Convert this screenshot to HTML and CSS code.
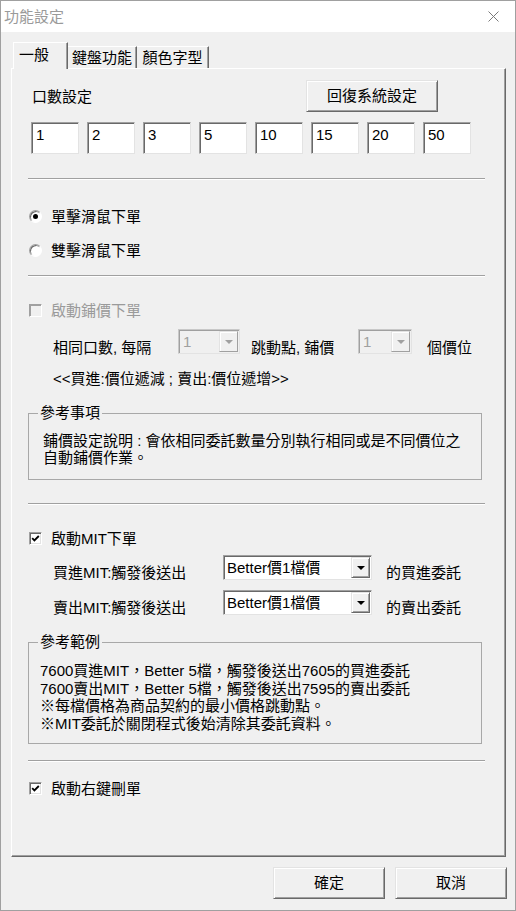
FILE: index.html
```html
<!DOCTYPE html>
<html lang="zh-Hant">
<head>
<meta charset="utf-8">
<title>功能設定</title>
<link rel="stylesheet" href="styles.css">
</head>
<body>
<div class="window">
  <div class="titlebar">
    <span class="title">功能設定</span>
    <svg class="close" width="11" height="11" viewBox="0 0 11 11"><path d="M0.5 0.5 L10.5 10.5 M10.5 0.5 L0.5 10.5" stroke="#7a7a7a" stroke-width="1"/></svg>
  </div>
  <div class="tabstrip">
    <div class="tab active">一般</div>
    <div class="tab t2">鍵盤功能</div>
    <div class="tab t3">顏色字型</div>
  </div>
  <div class="panel">
    <div class="row-top">
      <span class="lbl">口數設定</span>
      <button class="btn btn-reset">回復系統設定</button>
    </div>
    <div class="inputs">
      <div class="edit">1</div>
      <div class="edit">2</div>
      <div class="edit">3</div>
      <div class="edit">5</div>
      <div class="edit">10</div>
      <div class="edit">15</div>
      <div class="edit">20</div>
      <div class="edit">50</div>
    </div>
    <div class="sep sep1"></div>
    <div class="opt radio1"><span class="radio checked"><span class="dot"></span></span><span class="opt-text">單擊滑鼠下單</span></div>
    <div class="opt radio2"><span class="radio"></span><span class="opt-text">雙擊滑鼠下單</span></div>
    <div class="sep sep2"></div>
    <div class="opt chk1 disabled"><span class="cb cb-disabled"></span><span class="opt-text">啟動鋪價下單</span></div>
    <div class="combo-row row-fill">
      <span class="rlbl w-fill1">相同口數, 每隔</span>
      <div class="combo combo-dis c-fill1"><span class="ctext">1</span><span class="ddbtn"><span class="arrow arrow-dis"></span></span></div>
      <span class="rlbl w-fill2">跳動點, 鋪價</span>
      <div class="combo combo-dis c-fill2"><span class="ctext">1</span><span class="ddbtn"><span class="arrow arrow-dis"></span></span></div>
      <span class="rlbl">個價位</span>
    </div>
    <div class="note">&lt;&lt;買進:價位遞減 ; 賣出:價位遞增&gt;&gt;</div>
    <fieldset class="group group1">
      <legend>參考事項</legend>
      <div class="gtext">鋪價設定說明 : 會依相同委託數量分別執行相同或是不同價位之<br>自動鋪價作業。</div>
    </fieldset>
    <div class="sep sep3"></div>
    <div class="opt chk2"><span class="cb"><svg width="11" height="11" viewBox="0 0 11 11"><path d="M2.2 5.2 L4.4 7.4 L8.8 3" fill="none" stroke="#000" stroke-width="1.8"/></svg></span><span class="opt-text">啟動MIT下單</span></div>
    <div class="combo-row row-mit1">
      <span class="rlbl w-mit">買進MIT:觸發後送出</span>
      <div class="combo c-mit"><span class="ctext">Better價1檔價</span><span class="ddbtn"><span class="arrow"></span></span></div>
      <span class="rlbl">的買進委託</span>
    </div>
    <div class="combo-row row-mit2">
      <span class="rlbl w-mit">賣出MIT:觸發後送出</span>
      <div class="combo c-mit"><span class="ctext">Better價1檔價</span><span class="ddbtn"><span class="arrow"></span></span></div>
      <span class="rlbl">的賣出委託</span>
    </div>
    <fieldset class="group group2">
      <legend>參考範例</legend>
      <div class="gtext">7600買進MIT，Better 5檔，觸發後送出7605的買進委託<br>7600賣出MIT，Better 5檔，觸發後送出7595的賣出委託<br>※每檔價格為商品契約的最小價格跳動點。<br>※MIT委託於關閉程式後始清除其委託資料。</div>
    </fieldset>
    <div class="sep sep4"></div>
    <div class="opt chk3"><span class="cb"><svg width="11" height="11" viewBox="0 0 11 11"><path d="M2.2 5.2 L4.4 7.4 L8.8 3" fill="none" stroke="#000" stroke-width="1.8"/></svg></span><span class="opt-text">啟動右鍵刪單</span></div>
  </div>
  <div class="footer">
    <button class="btn btn-foot">確定</button>
    <button class="btn btn-foot">取消</button>
  </div>
</div>
</body>
</html>
```

FILE: styles.css
```css
* { box-sizing: border-box; }
html, body { margin: 0; padding: 0; }
body {
  width: 516px;
  height: 911px;
  overflow: hidden;
  background: #f0f0f0;
  font-family: "Liberation Sans", "Noto Sans CJK TC", "Noto Sans CJK SC", sans-serif;
  font-size: 15px;
  color: #000;
}
.window {
  width: 516px;
  height: 911px;
  border: 1px solid #a0a0a0;
  background: #f0f0f0;
  display: flex;
  flex-direction: column;
}
.titlebar {
  height: 31px;
  flex: none;
  background: #fff;
  display: flex;
  align-items: center;
  padding: 0 16px 0 3px;
}
.title { flex: 1; color: #9a9a9a; line-height: 31px; }
.close { display: block; }

.tabstrip {
  margin-top: 10px;
  height: 26px;
  flex: none;
  display: flex;
  align-items: flex-end;
  padding-left: 12px;
}
.tab {
  height: 22px;
  background: #f0f0f0;
  border-top: 1px solid #fff;
  border-right: 1px solid #696969;
  box-shadow: inset -1px 0 #a0a0a0;
  text-align: center;
  line-height: 22px;
}
.tab.active {
  position: relative;
  z-index: 2;
  width: 55px;
  height: 27px;
  margin-bottom: -1px;
  border-left: 1px solid #fff;
  text-align: left;
  padding-left: 5px;
  line-height: 24px;
}
.t2 { width: 69px; }
.t3 { width: 72px; }

.panel {
  margin-left: 10px;
  width: 495px;
  height: 789px;
  flex: none;
  border: 1px solid;
  border-color: #fff #696969 #696969 #fff;
  box-shadow: inset -1px -1px #a0a0a0;
  padding: 11px 20px 0 16px;
}
.row-top { display: flex; align-items: center; height: 32px; }
.lbl { padding-left: 4px; line-height: 20px; padding-top: 2px; }
.btn {
  font: inherit;
  color: #000;
  background: #f0f0f0;
  border: 1px solid;
  border-color: #e3e3e3 #696969 #696969 #e3e3e3;
  box-shadow: inset 1px 1px #fff, inset -1px -1px #a0a0a0;
  padding: 0;
  height: 32px;
  line-height: 30px;
}
.btn-reset { width: 132px; margin-left: auto; margin-right: 47px; }

.inputs { display: flex; gap: 8px; margin-top: 10px; padding-left: 3px; }
.edit {
  width: 48px;
  height: 32px;
  background: #fff;
  border: 1px solid;
  border-color: #a0a0a0 #e3e3e3 #e3e3e3 #a0a0a0;
  box-shadow: inset 1px 1px #696969;
  padding: 2px 0 0 4px;
  line-height: 20px;
}

.sep {
  height: 2px;
  border-top: 1px solid #a0a0a0;
  border-bottom: 1px solid #fff;
}
.sep1 { margin-top: 24px; }
.sep2 { margin-top: 15px; }
.sep3 { margin-top: 23px; }
.sep4 { margin-top: 16px; }

.opt { display: flex; align-items: center; height: 20px; padding-left: 1px; }
.opt-text { margin-left: 9px; line-height: 20px; padding-top: 1px; }
.radio1 { margin-top: 26px; }
.radio2 { margin-top: 14px; }
.chk1 { margin-top: 23px; }
.chk2 { margin-top: 23px; }
.chk3 { margin-top: 16px; }
.disabled .opt-text { color: #9a9a9a; }

.radio {
  width: 13px;
  height: 13px;
  border-radius: 50%;
  background: #fff;
  border: 1px solid;
  border-color: #a0a0a0 #fff #fff #a0a0a0;
  box-shadow: inset 1px 1px #696969;
  display: flex;
  align-items: center;
  justify-content: center;
}
.dot { width: 5px; height: 5px; border-radius: 50%; background: #000; }

.cb {
  width: 13px;
  height: 13px;
  background: #fff;
  border: 1px solid;
  border-color: #a0a0a0 #fff #fff #a0a0a0;
  box-shadow: inset 1px 1px #696969, inset -1px -1px #e3e3e3;
}
.cb svg { display: block; }
.cb-disabled { background: #f0f0f0; box-shadow: inset 1px 1px #a0a0a0; }

.combo-row { display: flex; align-items: flex-start; height: 25px; padding-left: 25px; }
.rlbl { line-height: 20px; padding-top: 9px; white-space: nowrap; }
.row-fill { margin-top: 9px; }
.row-mit1 { margin-top: 7px; }
.row-mit2 { margin-top: 10px; }
.row-mit1 .rlbl, .row-mit2 .rlbl { padding-top: 8px; }
.w-fill1 { width: 125px; }
.w-fill2 { width: 107px; }
.w-mit { width: 170px; }

.combo {
  display: flex;
  height: 25px;
  background: #fff;
  border: 1px solid;
  border-color: #a0a0a0 #e3e3e3 #e3e3e3 #a0a0a0;
  box-shadow: inset 1px 1px #696969;
  padding: 1px 1px 1px 2px;
}
.ctext { flex: 1; line-height: 21px; padding-left: 1px; white-space: nowrap; }
.ddbtn {
  width: 19px;
  background: #f0f0f0;
  border: 1px solid;
  border-color: #e3e3e3 #696969 #696969 #e3e3e3;
  box-shadow: inset 1px 1px #fff, inset -1px -1px #a0a0a0;
  display: flex;
  align-items: center;
  justify-content: center;
}
.arrow {
  width: 0;
  height: 0;
  border-left: 4px solid transparent;
  border-right: 4px solid transparent;
  border-top: 4px solid #000;
}
.combo-dis { background: #f0f0f0; border-color: #c8c8c8 #e3e3e3 #e3e3e3 #c8c8c8; box-shadow: inset 1px 1px #a0a0a0; }
.combo-dis .ctext { color: #a0a0a0; padding-left: 2px; }
.combo-dis .ddbtn { border-color: #e3e3e3 #a0a0a0 #a0a0a0 #e3e3e3; box-shadow: inset 1px 1px #fff; }
.arrow-dis { border-top-color: #a0a0a0; }
.c-fill1 { width: 62px; margin-right: 11px; }
.c-fill2 { width: 54px; margin-right: 15px; }
.c-mit { width: 149px; margin-right: 14px; }

.note { margin-top: 15px; padding-left: 25px; line-height: 20px; }

.group {
  margin: 0;
  width: 454px;
  border: 1px solid #a8a8a8;
  min-width: 0;
}
.group legend { padding: 0 2px; line-height: 20px; }
.gtext { white-space: nowrap; }
.group1 { margin-top: 14px; padding: 9px 0 13px 14px; }
.group1 legend { margin-left: -5px; }
.group1 .gtext { line-height: 17px; }
.group2 { margin-top: 17px; padding: 10px 0 11px 11px; }
.group2 legend { margin-left: -2px; }
.group2 .gtext { line-height: 17.5px; }

.footer {
  margin-top: 10px;
  display: flex;
  justify-content: flex-end;
  gap: 10px;
  padding-right: 8px;
}
.btn-foot { width: 112px; }
```
